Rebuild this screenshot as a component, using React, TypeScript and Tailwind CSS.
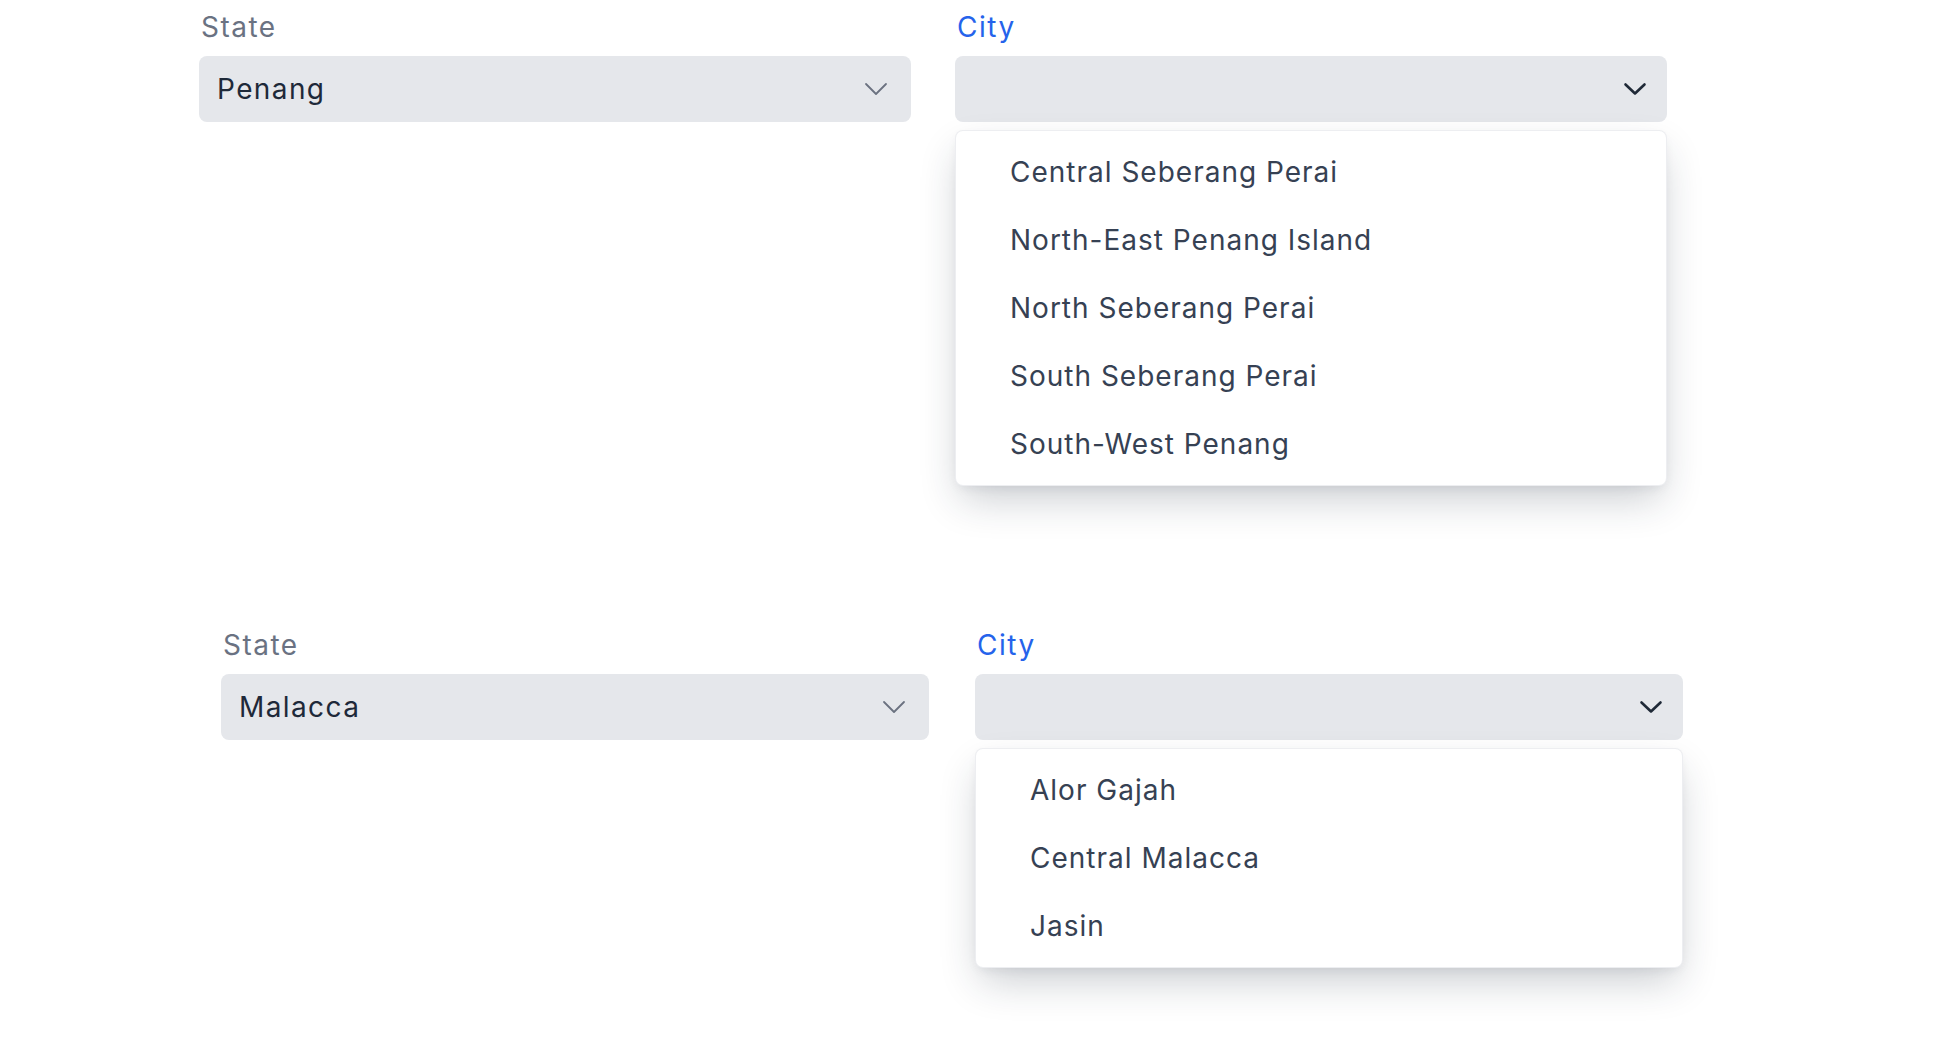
import React from "react";

function Chevron({ active }: { active?: boolean }) {
  return (
    <svg
      width={24}
      height={14}
      viewBox="0 0 24 14"
      fill="none"
      stroke={active ? "#1f2937" : "#6b7280"}
      strokeWidth={active ? 2.6 : 1.8}
      strokeLinecap="round"
      strokeLinejoin="round"
    >
      {active ? <path d="M2.5 2.5 L12 11.5 L21.5 2.5" /> : <path d="M2 2 L12 12 L22 2" />}
    </svg>
  );
}

function Section({
  state,
  cities,
  colW,
  gap,
  padLeft,
}: {
  state: string;
  cities: string[];
  colW: string;
  gap: string;
  padLeft: string;
}) {
  return (
    <div className={`flex ${gap} ${padLeft}`}>
      <div className={`${colW} flex flex-col`}>
        <div className="text-[28px] leading-[34px] tracking-[1.5px] text-gray-500 pl-[2px]">State</div>
        <div className="mt-[12px] h-[66px] rounded-[8px] bg-[#e5e7eb] flex items-center justify-between pl-[18px] pr-[23px]">
          <span className="text-[28px] tracking-[1.4px] text-gray-800">{state}</span>
          <Chevron />
        </div>
      </div>
      <div className={`${colW} flex flex-col`}>
        <div className="text-[28px] leading-[34px] tracking-[1.5px] text-[#2563eb] pl-[2px]">City</div>
        <div className="mt-[12px] h-[66px] rounded-[8px] bg-[#e5e7eb] flex items-center justify-end pr-[20px]">
          <Chevron active />
        </div>
        <div className="mt-[8px] rounded-[8px] bg-white border border-gray-200/70 shadow-[0_18px_40px_-6px_rgba(30,41,59,0.24),0_4px_12px_-4px_rgba(30,41,59,0.10)] py-[7px]">
          {cities.map((c) => (
            <div key={c} className="h-[68px] flex items-center pl-[54px] text-[28px] tracking-[1px] text-gray-700">
              {c}
            </div>
          ))}
        </div>
      </div>
    </div>
  );
}

export default function App() {
  return (
    <div
      className="w-[1948px] h-[1054px] bg-white overflow-hidden pt-[10px]"
      style={{ fontFamily: "Inter, 'Noto Sans', sans-serif" }}
    >
      <Section
        state="Penang"
        cities={[
          "Central Seberang Perai",
          "North-East Penang Island",
          "North Seberang Perai",
          "South Seberang Perai",
          "South-West Penang",
        ]}
        colW="w-[712px]"
        gap="gap-[44px]"
        padLeft="pl-[199px]"
      />
      <div className="h-[142px]" />
      <Section
        state="Malacca"
        cities={["Alor Gajah", "Central Malacca", "Jasin"]}
        colW="w-[708px]"
        gap="gap-[46px]"
        padLeft="pl-[221px]"
      />
    </div>
  );
}
